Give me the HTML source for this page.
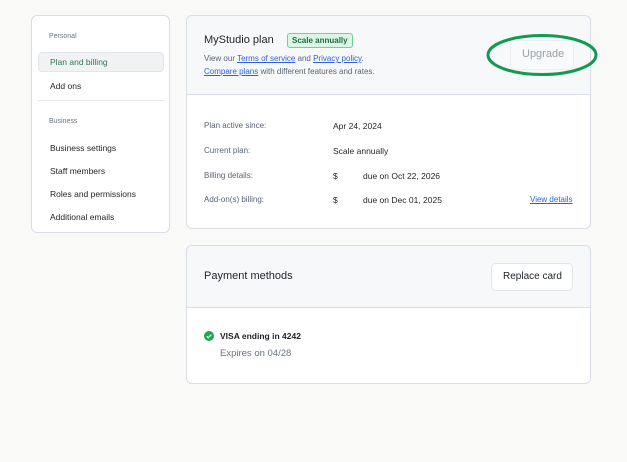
<!DOCTYPE html><html><head><style>
*{box-sizing:border-box;margin:0;padding:0}
body{width:627px;height:462px;background:#f9f9f8;font-family:"Liberation Sans",sans-serif;position:relative;overflow:hidden;color:#1f2328}
.box{position:absolute;background:#fff;border:1px solid #d9dde5;border-radius:6px}
.t{position:absolute;white-space:nowrap}
a{color:#2d5fe0;text-decoration:underline}
.s{font-size:8.5px;color:#1f2328}
.g{font-size:8px;color:#5b6475}
</style></head><body>
<div class="box" style="left:31px;top:15px;width:139px;height:218px">
<div class="t" style="left:17px;top:17px;font-size:7px;color:#6b7385">Personal</div>
<div style="position:absolute;left:6px;top:36px;width:126px;height:20px;background:#f1f2f4;border:1px solid #e3e5e9;border-radius:4px"></div>
<div class="t" style="left:18px;top:41px;font-size:8.5px;color:#2f7a55">Plan and billing</div>
<div class="t s" style="left:18px;top:65px">Add ons</div>
<div style="position:absolute;left:6px;top:84px;width:126px;height:1px;background:#e3e5e9"></div>
<div class="t" style="left:17px;top:102px;font-size:7px;color:#6b7385">Business</div>
<div class="t s" style="left:18px;top:127px">Business settings</div>
<div class="t s" style="left:18px;top:150px">Staff members</div>
<div class="t s" style="left:18px;top:173px">Roles and permissions</div>
<div class="t s" style="left:18px;top:196px">Additional emails</div>
</div>
<div class="box" style="left:186px;top:15px;width:405px;height:214px;overflow:hidden">
<div style="position:absolute;left:0;top:0;width:100%;height:79px;background:#f7f8fa;border-bottom:1px solid #d9dde5"></div>
<div class="t" style="left:17px;top:18px;font-size:11px">MyStudio plan</div>
<div class="t" style="left:100px;top:17px;font-size:8px;font-weight:bold;color:#1f6b43;background:#dcf5e4;border:1px solid #6fd28f;border-radius:3px;padding:2px 4px">Scale annually</div>
<div class="t g" style="left:17px;top:38px">View our <a>Terms of service</a> and <a>Privacy policy</a>.</div>
<div class="t g" style="left:17px;top:51px"><a>Compare plans</a> with different features and rates.</div>
<div style="position:absolute;left:323px;top:24px;width:64px;height:30px;border:1px solid #eceef1;border-radius:5px;background:#f9fafb"></div>
<div class="t" style="left:335px;top:32px;font-size:11px;color:#9aa0a8">Upgrade</div>
<div class="t g" style="left:17px;top:105px">Plan active since:</div><div class="t s" style="left:146px;top:105px">Apr 24, 2024</div>
<div class="t g" style="left:17px;top:130px">Current plan:</div><div class="t s" style="left:146px;top:130px">Scale annually</div>
<div class="t g" style="left:17px;top:155px">Billing details:</div><div class="t s" style="left:146px;top:155px">$</div><div class="t s" style="left:176px;top:155px">due on Oct 22, 2026</div>
<div class="t g" style="left:17px;top:179px">Add-on(s) billing:</div><div class="t s" style="left:146px;top:179px">$</div><div class="t s" style="left:176px;top:179px">due on Dec 01, 2025</div>
<div class="t" style="left:343px;top:179px;font-size:8px"><a>View details</a></div>
</div>
<svg style="position:absolute;left:485px;top:33px" width="115" height="46"><ellipse cx="57" cy="22" rx="54" ry="19.5" fill="none" stroke="#129a52" stroke-width="3"/></svg>
<div class="box" style="left:186px;top:245px;width:405px;height:139px;overflow:hidden">
<div style="position:absolute;left:0;top:0;width:100%;height:62px;background:#f7f8fa;border-bottom:1px solid #d9dde5"></div>
<div class="t" style="left:17px;top:24px;font-size:11px">Payment methods</div>
<div style="position:absolute;left:304px;top:17px;width:82px;height:28px;background:#fff;border:1px solid #e1e4e8;border-radius:5px"></div>
<div class="t" style="left:316px;top:25px;font-size:10px">Replace card</div>
<svg style="position:absolute;left:17px;top:85px" width="10" height="10"><circle cx="5" cy="5" r="5" fill="#1fa653"/><path d="M2.8 5.2l1.5 1.5 3-3" stroke="#fff" stroke-width="1.3" fill="none"/></svg>
<div class="t" style="left:33px;top:85px;font-size:8.5px;font-weight:bold">VISA ending in 4242</div>
<div class="t" style="left:33px;top:102px;font-size:9.5px;color:#6b7385">Expires on 04/28</div>
</div>
</body></html>
